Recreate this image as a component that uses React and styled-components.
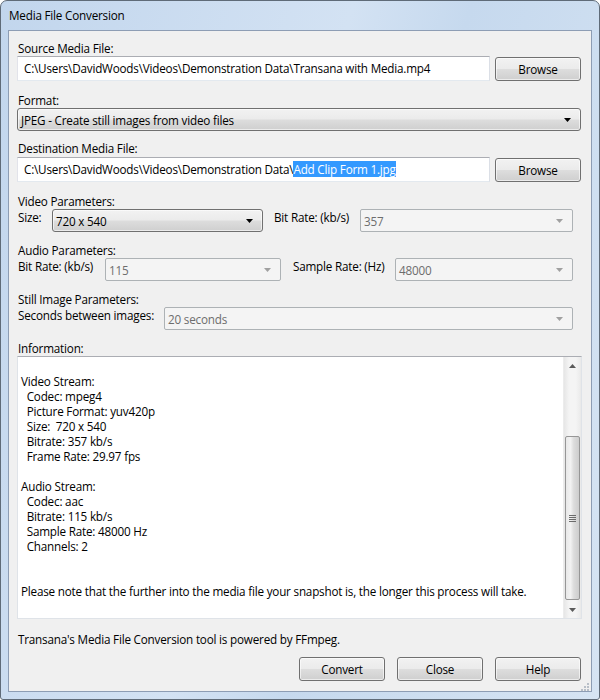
import React from "react";
import styled, { createGlobalStyle, css } from "styled-components";

const GlobalStyle = createGlobalStyle`
  html, body {
    margin: 0;
    padding: 0;
    background: #ffffff;
  }
  body {
    font-family: "Open Sans", "Noto Sans", sans-serif;
    font-size: 11.7px;
    letter-spacing: -0.2px;
    color: #000;
  }
`;

const Frame = styled.div`
  width: 600px;
  height: 700px;
  box-sizing: border-box;
  border: 1px solid #5f6b78;
  border-radius: 7px 7px 3px 3px;
  background: linear-gradient(105deg, #c2d6ed 0%, #d3e2f3 45%, #c6d9ee 60%, #d6e4f3 100%);
  padding: 0 7px 7px 7px;
  display: flex;
  flex-direction: column;
`;

const TitleBar = styled.div`
  height: 29px;
  line-height: 29px;
  padding-left: 1px;
  color: #000;
`;

const Client = styled.div`
  flex: 1;
  position: relative;
  border: 1px solid #8d9db4;
  background: #f0f0f0;
  padding: 10px 10px 0 8px;
  display: flex;
  flex-direction: column;
`;

const Label = styled.div`
  line-height: 15px;
  padding-left: 1px;
  margin-top: ${(p) => p.$top || 0}px;
  white-space: nowrap;
`;

const Row = styled.div`
  display: flex;
  align-items: flex-start;
  margin-top: ${(p) => p.$top || 0}px;
`;

const RowLabel = styled.div`
  width: ${(p) => p.$w}px;
  margin-left: ${(p) => p.$ml || 0}px;
  padding: 1px 0 0 1px;
  box-sizing: border-box;
  line-height: 15px;
  white-space: nowrap;
  flex-shrink: 0;
`;

const TextBox = styled.div`
  width: 473px;
  height: 25px;
  box-sizing: border-box;
  flex-shrink: 0;
  background: #fff;
  border: 1px solid #e3e9ef;
  border-top-color: #abadb3;
  border-left-color: #e2e3ea;
  border-right-color: #dbdfe6;
  padding: 0 0 0 6px;
  line-height: 22px;
  white-space: nowrap;
  overflow: hidden;
  margin-right: 5px;
`;

const Selected = styled.span`
  background: #3399ff;
  color: #fff;
`;

const winButton = css`
  background: linear-gradient(#f2f2f2 0%, #ebebeb 48%, #dddddd 52%, #cfcfcf 100%);
  border: 1px solid #707070;
  border-radius: 3px;
  box-shadow: inset 0 0 0 1px rgba(255, 255, 255, 0.6);
`;

const Button = styled.button`
  ${winButton};
  width: 86px;
  height: 24px;
  margin-top: ${(p) => p.$top || 0}px;
  padding: 0;
  font-family: inherit;
  font-size: inherit;
  letter-spacing: inherit;
  color: #000;
  flex-shrink: 0;
`;

const ArrowDown = ({ color }) => (
  <svg width="7" height="4" viewBox="0 0 7 4">
    <path d="M0 0 H7 L3.5 4 Z" fill={color} />
  </svg>
);

const SelectBox = styled.div`
  width: ${(p) => p.$w}px;
  height: 23px;
  box-sizing: border-box;
  flex-shrink: 0;
  display: flex;
  align-items: center;
  justify-content: space-between;
  padding: 0 9px 0 3px;
  white-space: nowrap;
  ${(p) =>
    p.$disabled
      ? css`
          background: #f4f4f4;
          border: 1px solid #adb2b5;
          border-radius: 2px;
          color: #6d6d6d;
        `
      : winButton}
`;

const Select = ({ w, disabled, children }) => (
  <SelectBox $w={w} $disabled={disabled}>
    <span>{children}</span>
    <ArrowDown color={disabled ? "#a0a0a0" : "#000"} />
  </SelectBox>
);

const InfoBox = styled.div`
  width: 565px;
  height: 263px;
  box-sizing: border-box;
  background: #fff;
  border: 1px solid #dfe3e8;
  border-top-color: #abadb3;
  display: flex;
`;

const InfoText = styled.pre`
  flex: 1;
  margin: 0;
  padding: 2px 0 0 3px;
  font-family: inherit;
  font-size: inherit;
  line-height: 15px;
  white-space: pre;
  overflow: hidden;
`;

const ScrollBar = styled.div`
  width: 17px;
  background: linear-gradient(90deg, #e6e6e6, #f4f4f4 30%, #f4f4f4 70%, #e9e9e9);
  display: flex;
  flex-direction: column;
  align-items: center;
  border-left: 1px solid #ececec;
`;

const ScrollArrow = styled.div`
  height: 17px;
  display: flex;
  align-items: center;
  justify-content: center;
`;

const ScrollTrack = styled.div`
  flex: 1;
  width: 100%;
  display: flex;
  flex-direction: column;
  justify-content: flex-end;
  align-items: center;
`;

const Thumb = styled.div`
  width: 15px;
  height: 164px;
  box-sizing: border-box;
  margin-bottom: 1px;
  border: 1px solid #969696;
  border-radius: 2px;
  background: linear-gradient(90deg, #e8e8e8, #f2f2f2 35%, #dcdcdc 60%, #cdcdcd);
  display: flex;
  align-items: center;
  justify-content: center;
`;

const Grip = () => (
  <svg width="7" height="7" viewBox="0 0 7 7">
    {[0, 2, 4, 6].map((y) => (
      <rect key={y} x="0" y={y} width="7" height="1" fill="#6b6b6b" />
    ))}
  </svg>
);

const Footer = styled.div`
  margin-top: 13px;
  line-height: 15px;
  padding-left: 1px;
`;

const ButtonBar = styled.div`
  display: flex;
  justify-content: flex-end;
  gap: 12px;
  margin-top: 10px;
`;

const ResizeGrip = styled.div`
  position: absolute;
  right: 1px;
  bottom: 1px;
  width: 11px;
  height: 11px;
`;

const infoText = `
Video Stream:
  Codec: mpeg4
  Picture Format: yuv420p
  Size:  720 x 540
  Bitrate: 357 kb/s
  Frame Rate: 29.97 fps

Audio Stream:
  Codec: aac
  Bitrate: 115 kb/s
  Sample Rate: 48000 Hz
  Channels: 2


Please note that the further into the media file your snapshot is, the longer this process will take.`;

export default function App() {
  return (
    <>
      <GlobalStyle />
      <Frame>
        <TitleBar>Media File Conversion</TitleBar>
        <Client>
          <Label>Source Media File:</Label>
          <Row>
            <TextBox>C:\Users\DavidWoods\Videos\Demonstration Data\Transana with Media.mp4</TextBox>
            <Button $top={1}>Browse</Button>
          </Row>

          <Label $top={12}>Format:</Label>
          <Row>
            <Select w={564}>JPEG - Create still images from video files</Select>
          </Row>

          <Label $top={10}>Destination Media File:</Label>
          <Row $top={1}>
            <TextBox>
              C:\Users\DavidWoods\Videos\Demonstration Data\<Selected>Add Clip Form 1.jpg</Selected>
            </TextBox>
            <Button $top={1}>Browse</Button>
          </Row>

          <Label $top={12}>Video Parameters:</Label>
          <Row>
            <RowLabel $w={35}>Size:</RowLabel>
            <Select w={211}>720 x 540</Select>
            <RowLabel $w={87} $ml={10}>Bit Rate: (kb/s)</RowLabel>
            <Select w={213} disabled>357</Select>
          </Row>

          <Label $top={11}>Audio Parameters:</Label>
          <Row>
            <RowLabel $w={88}>Bit Rate: (kb/s)</RowLabel>
            <Select w={176} disabled>115</Select>
            <RowLabel $w={103} $ml={11}>Sample Rate: (Hz)</RowLabel>
            <Select w={178} disabled>48000</Select>
          </Row>

          <Label $top={11}>Still Image Parameters:</Label>
          <Row>
            <RowLabel $w={147}>Seconds between images:</RowLabel>
            <Select w={409} disabled>20 seconds</Select>
          </Row>

          <Label $top={11}>Information:</Label>
          <InfoBox>
            <InfoText>{infoText}</InfoText>
            <ScrollBar>
              <ScrollArrow>
                <svg width="7" height="4" viewBox="0 0 7 4">
                  <path d="M0 4 H7 L3.5 0 Z" fill="#5a5a5a" />
                </svg>
              </ScrollArrow>
              <ScrollTrack>
                <Thumb>
                  <Grip />
                </Thumb>
              </ScrollTrack>
              <ScrollArrow>
                <ArrowDown color="#5a5a5a" />
              </ScrollArrow>
            </ScrollBar>
          </InfoBox>

          <Footer>Transana's Media File Conversion tool is powered by FFmpeg.</Footer>

          <ButtonBar>
            <Button>Convert</Button>
            <Button>Close</Button>
            <Button>Help</Button>
          </ButtonBar>

          <ResizeGrip>
            <svg width="11" height="11" viewBox="0 0 11 11">
              {[
                [8, 2],
                [5, 5],
                [8, 5],
                [2, 8],
                [5, 8],
                [8, 8],
              ].map(([x, y]) => (
                <rect key={`${x}-${y}`} x={x} y={y} width="2" height="2" fill="#b8bfc8" />
              ))}
            </svg>
          </ResizeGrip>
        </Client>
      </Frame>
    </>
  );
}
